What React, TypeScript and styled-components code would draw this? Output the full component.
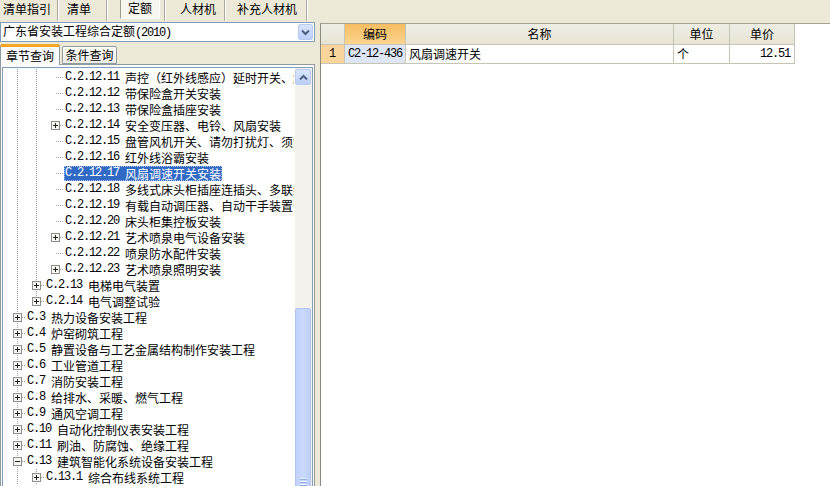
import React from 'react';
import styled, { createGlobalStyle } from 'styled-components';

const GlobalStyle = createGlobalStyle`
  html, body {
    margin: 0;
    padding: 0;
    background: #ece9d8;
    overflow: hidden;
  }
  body {
    font-family: "Noto Sans CJK SC", sans-serif;
    font-size: 12px;
    color: #000;
  }
`;

const Screen = styled.div`
  width: 830px;
  height: 486px;
  overflow: hidden;
  display: flex;
  flex-direction: column;
  background: #ece9d8;
`;

const TopBar = styled.div`
  height: 21px;
  display: flex;
  flex-shrink: 0;
`;

const TopTab = styled.div<{ $w: number; $pl: number }>`
  width: ${(p) => p.$w}px;
  padding-left: ${(p) => p.$pl}px;
  box-sizing: border-box;
  display: flex;
  align-items: center;
  padding-bottom: 3px;
  border-right: 1px solid #aca899;
  box-shadow: 1px 0 0 #fff;
  margin-right: 1px;
  font-size: 12px;
  line-height: 14px;
  white-space: nowrap;
`;

const PressedTab = styled.div`
  width: 40px;
  height: 20px;
  margin-left: 12px;
  box-sizing: border-box;
  display: flex;
  align-items: center;
  justify-content: center;
  padding-bottom: 2px;
  background: #f6f5ef;
  border: 1px solid;
  border-color: #9d9a8a #fff #fff #9d9a8a;
`;

const Body = styled.div`
  flex: 1;
  min-height: 0;
  display: flex;
`;

const LeftPanel = styled.div`
  width: 315px;
  flex-shrink: 0;
  padding-top: 1px;
  display: flex;
  flex-direction: column;
`;

const Combo = styled.div`
  height: 20px;
  box-sizing: border-box;
  border: 1px solid #7f9db9;
  background: #fff;
  display: flex;
  align-items: center;
  padding-left: 2px;
  flex-shrink: 0;
`;

const ComboText = styled.div`
  flex: 1;
  white-space: nowrap;
  line-height: 16px;
`;

const ComboButton = styled.div`
  width: 15px;
  height: 16px;
  margin-right: 1px;
  box-sizing: border-box;
  border: 1px solid #b9cbf3;
  border-radius: 2px;
  background: linear-gradient(#d9e5fd, #bccff9);
  display: flex;
  align-items: center;
  justify-content: center;
`;

const TabStrip = styled.div`
  height: 21px;
  margin-top: 1px;
  display: flex;
  align-items: flex-end;
  flex-shrink: 0;
`;

const PageTab = styled.div<{ $active?: boolean }>`
  box-sizing: border-box;
  height: ${(p) => (p.$active ? 21 : 18)}px;
  width: ${(p) => (p.$active ? 60 : 55)}px;
  margin-left: ${(p) => (p.$active ? 0 : 2)}px;
  margin-bottom: ${(p) => (p.$active ? -1 : 0)}px;
  border: 1px solid #919b9c;
  border-bottom: ${(p) => (p.$active ? '0' : '1px solid #919b9c')};
  border-top: ${(p) => (p.$active ? '3px solid #f5a623' : '1px solid #919b9c')};
  border-radius: 2px 2px 0 0;
  background: ${(p) => (p.$active ? '#fcfcfe' : 'linear-gradient(#ffffff, #ecebe5)')};
  display: flex;
  align-items: center;
  justify-content: center;
  font-size: 12px;
  line-height: 14px;
  position: relative;
  z-index: ${(p) => (p.$active ? 1 : 0)};
`;

const TabPage = styled.div`
  flex: 1;
  min-height: 0;
  border: 1px solid #919b9c;
  border-bottom: 0;
  background: #fcfcfe;
  padding: 2px 1px 0 1px;
  display: flex;
  flex-direction: column;
`;

const TreeBox = styled.div`
  flex: 1;
  min-height: 0;
  border: 1px solid #7f9db9;
  border-bottom: 0;
  background: #fff;
  display: flex;
  overflow: hidden;
`;

const TreeContent = styled.div`
  flex: 1;
  min-width: 0;
  overflow: hidden;
  padding-top: 1px;
`;

const TreeRow = styled.div`
  height: 16px;
  display: flex;
  align-items: center;
  padding-left: 5px;
  white-space: nowrap;
`;

const LinesSvg = styled.svg`
  flex-shrink: 0;
  display: block;
`;

const Label = styled.div<{ $selected?: boolean }>`
  height: 15px;
  line-height: 15px;
  padding: 0 1px;
  display: flex;
  align-items: center;
  background: ${(p) => (p.$selected ? '#316ac5' : 'transparent')};
  color: ${(p) => (p.$selected ? '#fff' : '#000')};
  outline: ${(p) => (p.$selected ? '1px dotted #a9c1ec' : 'none')};
  outline-offset: -1px;
`;

const Code = styled.span<{ $gap?: boolean }>`
  font-family: "Liberation Mono", monospace;
  font-size: 12px;
  letter-spacing: -1.2px;
  margin-right: ${(p) => (p.$gap ? 6 : 0)}px;
`;

const ScrollBar = styled.div`
  width: 17px;
  flex-shrink: 0;
  display: flex;
  flex-direction: column;
  background: #f3f2ec;
  border-left: 1px solid #fbfbf8;
  overflow: hidden;
`;

const ScrollButton = styled.div`
  width: 16px;
  height: 16px;
  flex-shrink: 0;
  margin-top: 1px;
  box-sizing: border-box;
  border: 1px solid #b9cbf3;
  border-radius: 2px;
  background: linear-gradient(#dae6fe, #bccff9);
  display: flex;
  align-items: center;
  justify-content: center;
`;

const ScrollTrack = styled.div`
  height: 223px;
  flex-shrink: 0;
`;

const ScrollThumb = styled.div`
  width: 16px;
  height: 350px;
  flex-shrink: 0;
  box-sizing: border-box;
  border: 1px solid #b3c6f3;
  border-radius: 2px;
  background: linear-gradient(90deg, #c0d2fb, #cad9fd 50%, #bccffa);
  display: flex;
  flex-direction: column;
  align-items: center;
  justify-content: center;
  gap: 1px;
`;

const Grip = styled.div`
  width: 7px;
  height: 1px;
  background: #eef4fe;
  box-shadow: 0 1px 0 #8cabeb;
  margin-bottom: 1px;
`;

const Splitter = styled.div`
  width: 5px;
  flex-shrink: 0;
`;

const RightPanel = styled.div`
  flex: 1;
  margin-top: 2px;
  border-top: 1px solid #a6a396;
  border-left: 1px solid #8c8a80;
  background: #fff;
`;

const Grid = styled.div`
  display: grid;
  grid-template-columns: 24px 61px 268px 56px 65px;
  width: max-content;
`;

const HeadCell = styled.div<{ $active?: boolean }>`
  height: 21px;
  box-sizing: border-box;
  border-right: 1px solid #c8c4b4;
  border-bottom: 1px solid #c8c4b4;
  background: ${(p) => (p.$active ? 'linear-gradient(#f7bd62, #fbd48f)' : 'linear-gradient(#f0eee4, #e8e5d6)')};
  display: flex;
  align-items: center;
  justify-content: center;
  line-height: 14px;
`;

const Cell = styled.div<{ $bg?: string; $align?: string }>`
  height: 19px;
  box-sizing: border-box;
  border-right: 1px solid #c8c4b4;
  border-bottom: 1px solid #c8c4b4;
  background: ${(p) => p.$bg || '#fff'};
  display: flex;
  align-items: center;
  justify-content: ${(p) => p.$align || 'flex-start'};
  padding: 0 4px 0 3px;
  white-space: nowrap;
  overflow: hidden;
  line-height: 14px;
`;

type Conn = 'mid' | 'end' | 'none';

interface Node {
  level: number;
  code: string;
  name: string;
  guides: boolean[];
  conn: Conn;
  toggle?: 'plus' | 'minus';
  selected?: boolean;
}

const leaf3 = (code: string, name: string, extra: Partial<Node> = {}): Node => ({
  level: 3,
  code,
  name,
  guides: [true, true],
  conn: 'none',
  ...extra,
});

const top = (code: string, name: string, extra: Partial<Node> = {}): Node => ({
  level: 1,
  code,
  name,
  guides: [],
  conn: 'mid',
  toggle: 'plus',
  ...extra,
});

const nodes: Node[] = [
  leaf3('C.2.12.11', '声控（红外线感应）延时开关、触摸延时开关安装'),
  leaf3('C.2.12.12', '带保险盒开关安装'),
  leaf3('C.2.12.13', '带保险盒插座安装'),
  leaf3('C.2.12.14', '安全变压器、电铃、风扇安装', { toggle: 'plus' }),
  leaf3('C.2.12.15', '盘管风机开关、请勿打扰灯、须刨插座安装'),
  leaf3('C.2.12.16', '红外线浴霸安装'),
  leaf3('C.2.12.17', '风扇调速开关安装', { selected: true }),
  leaf3('C.2.12.18', '多线式床头柜插座连插头、多联组合开关插座安装'),
  leaf3('C.2.12.19', '有载自动调压器、自动干手装置安装'),
  leaf3('C.2.12.20', '床头柜集控板安装'),
  leaf3('C.2.12.21', '艺术喷泉电气设备安装', { toggle: 'plus' }),
  leaf3('C.2.12.22', '喷泉防水配件安装'),
  leaf3('C.2.12.23', '艺术喷泉照明安装', { toggle: 'plus' }),
  { level: 2, code: 'C.2.13', name: '电梯电气装置', guides: [true], conn: 'mid', toggle: 'plus' },
  { level: 2, code: 'C.2.14', name: '电气调整试验', guides: [true], conn: 'end', toggle: 'plus' },
  top('C.3', '热力设备安装工程'),
  top('C.4', '炉窑砌筑工程'),
  top('C.5', '静置设备与工艺金属结构制作安装工程'),
  top('C.6', '工业管道工程'),
  top('C.7', '消防安装工程'),
  top('C.8', '给排水、采暖、燃气工程'),
  top('C.9', '通风空调工程'),
  top('C.10', '自动化控制仪表安装工程'),
  top('C.11', '刷油、防腐蚀、绝缘工程'),
  top('C.13', '建筑智能化系统设备安装工程', { toggle: 'minus' }),
  { level: 2, code: 'C.13.1', name: '综合布线系统工程', guides: [true], conn: 'mid', toggle: 'plus' },
];

const LINE = '#a0a0a0';

function TreeLines({ node }: { node: Node }) {
  const w = node.level * 19 - 1;
  const c = node.level - 1;
  const cx = c * 19 + 9.5;
  const base = c * 19;
  return (
    <LinesSvg width={w} height={16} shapeRendering="crispEdges">
      {node.guides.map((g, i) =>
        g ? (
          <line key={i} x1={i * 19 + 9.5} y1={0} x2={i * 19 + 9.5} y2={16} stroke={LINE} strokeDasharray="1 1" />
        ) : null
      )}
      {node.conn !== 'none' && (
        <line x1={cx} y1={0} x2={cx} y2={node.conn === 'mid' ? 16 : 9} stroke={LINE} strokeDasharray="1 1" />
      )}
      <line x1={cx} y1={8.5} x2={w} y2={8.5} stroke={LINE} strokeDasharray="1 1" />
      {node.toggle && (
        <g>
          <rect x={base + 5.5} y={4.5} width={8} height={8} fill="#fff" stroke="#8e8f8f" />
          <rect x={base + 6} y={5} width={7} height={7} fill="#f0efe9" opacity={0.6} />
          <line x1={base + 7} y1={8.5} x2={base + 12} y2={8.5} stroke="#222" />
          {node.toggle === 'plus' && <line x1={cx} y1={6} x2={cx} y2={11} stroke="#222" />}
        </g>
      )}
    </LinesSvg>
  );
}

const Chevron = ({ up }: { up?: boolean }) => (
  <svg width="9" height="7" viewBox="0 0 9 7">
    <path
      d={up ? 'M1 5.5 L4.5 2 L8 5.5' : 'M1 1.5 L4.5 5 L8 1.5'}
      fill="none"
      stroke="#4d6185"
      strokeWidth="2"
    />
  </svg>
);

const topTabs = [
  { label: '清单指引', w: 58, pl: 3 },
  { label: '清单', w: 48, pl: 8 },
];
const topTabsAfter = [
  { label: '人材机', w: 59, pl: 14 },
  { label: '补充人材机', w: 81, pl: 11 },
];

export default function App() {
  return (
    <Screen>
      <GlobalStyle />
      <TopBar>
        {topTabs.map((t) => (
          <TopTab key={t.label} $w={t.w} $pl={t.pl}>
            {t.label}
          </TopTab>
        ))}
        <TopTab $w={57} $pl={0}>
          <PressedTab>定额</PressedTab>
        </TopTab>
        {topTabsAfter.map((t) => (
          <TopTab key={t.label} $w={t.w} $pl={t.pl}>
            {t.label}
          </TopTab>
        ))}
      </TopBar>
      <Body>
        <LeftPanel>
          <Combo>
            <ComboText>
              广东省安装工程综合定额<Code>(2010)</Code>
            </ComboText>
            <ComboButton>
              <Chevron />
            </ComboButton>
          </Combo>
          <TabStrip>
            <PageTab $active>章节查询</PageTab>
            <PageTab>条件查询</PageTab>
          </TabStrip>
          <TabPage>
            <TreeBox>
              <TreeContent>
                {nodes.map((n) => (
                  <TreeRow key={n.code}>
                    <TreeLines node={n} />
                    <Label $selected={n.selected}>
                      <Code $gap>{n.code}</Code>
                      {n.name}
                    </Label>
                  </TreeRow>
                ))}
              </TreeContent>
              <ScrollBar>
                <ScrollButton>
                  <Chevron up />
                </ScrollButton>
                <ScrollTrack />
                <ScrollThumb>
                  <Grip />
                  <Grip />
                  <Grip />
                  <Grip />
                </ScrollThumb>
              </ScrollBar>
            </TreeBox>
          </TabPage>
        </LeftPanel>
        <Splitter />
        <RightPanel>
          <Grid>
            <HeadCell />
            <HeadCell $active>编码</HeadCell>
            <HeadCell>名称</HeadCell>
            <HeadCell>单位</HeadCell>
            <HeadCell>单价</HeadCell>
            <Cell $bg="#fbd69c" $align="center">
              <Code>1</Code>
            </Cell>
            <Cell $bg="#dee6f4">
              <Code>C2-12-436</Code>
            </Cell>
            <Cell>风扇调速开关</Cell>
            <Cell>个</Cell>
            <Cell $align="flex-end">
              <Code>12.51</Code>
            </Cell>
          </Grid>
        </RightPanel>
      </Body>
    </Screen>
  );
}
